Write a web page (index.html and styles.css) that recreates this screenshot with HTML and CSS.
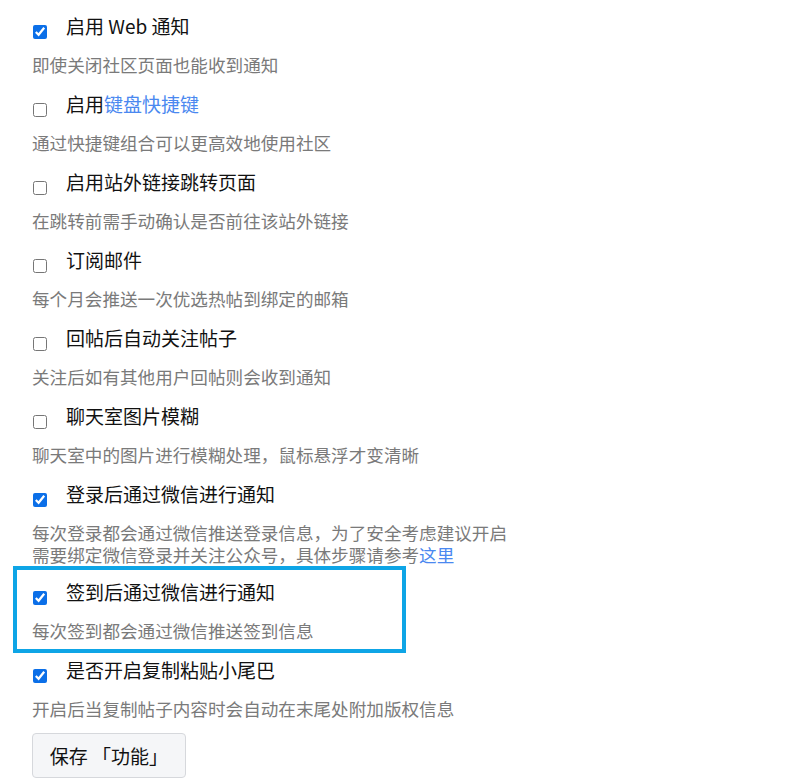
FILE: index.html
```html
<!DOCTYPE html>
<html lang="zh-CN">
<head>
    <meta charset="UTF-8">
    <meta name="viewport" content="width=device-width, initial-scale=1.0">
    <title>功能设置</title>
    <link rel="stylesheet" href="styles.css">
</head>
<body>
    <div class="settings">
        <div class="item">
            <label class="title"><input type="checkbox" checked><span>启用 Web 通知</span></label>
            <div class="desc">即使关闭社区页面也能收到通知</div>
        </div>
        <div class="item">
            <label class="title"><input type="checkbox"><span>启用<a href="#">键盘快捷键</a></span></label>
            <div class="desc">通过快捷键组合可以更高效地使用社区</div>
        </div>
        <div class="item">
            <label class="title"><input type="checkbox"><span>启用站外链接跳转页面</span></label>
            <div class="desc">在跳转前需手动确认是否前往该站外链接</div>
        </div>
        <div class="item">
            <label class="title"><input type="checkbox"><span>订阅邮件</span></label>
            <div class="desc">每个月会推送一次优选热帖到绑定的邮箱</div>
        </div>
        <div class="item">
            <label class="title"><input type="checkbox"><span>回帖后自动关注帖子</span></label>
            <div class="desc">关注后如有其他用户回帖则会收到通知</div>
        </div>
        <div class="item">
            <label class="title"><input type="checkbox"><span>聊天室图片模糊</span></label>
            <div class="desc">聊天室中的图片进行模糊处理，鼠标悬浮才变清晰</div>
        </div>
        <div class="item item-tight">
            <label class="title"><input type="checkbox" checked><span>登录后通过微信进行通知</span></label>
            <div class="desc">每次登录都会通过微信推送登录信息，为了安全考虑建议开启</div>
            <div class="desc">需要绑定微信登录并关注公众号，具体步骤请参考<a href="#">这里</a></div>
        </div>
        <div class="item highlight">
            <label class="title"><input type="checkbox" checked><span>签到后通过微信进行通知</span></label>
            <div class="desc">每次签到都会通过微信推送签到信息</div>
        </div>
        <div class="item">
            <label class="title"><input type="checkbox" checked><span>是否开启复制粘贴小尾巴</span></label>
            <div class="desc">开启后当复制帖子内容时会自动在末尾处附加版权信息</div>
        </div>
        <button class="save-btn">保存 「功能」</button>
    </div>
</body>
</html>
```

FILE: styles.css
```css
* {
    box-sizing: border-box;
    margin: 0;
    padding: 0;
}

body {
    font-family: 'Noto Sans CJK SC', 'Liberation Sans', sans-serif;
    background: #fff;
    color: #111;
}

.settings {
    padding: 11px 0 0 32px;
}

.item {
    margin-bottom: 13px;
}

.item-tight {
    margin-bottom: 11px;
}

.title {
    display: flex;
    align-items: flex-start;
    height: 30px;
    line-height: 30px;
    font-size: 19px;
    margin-bottom: 13px;
}

.title input {
    width: 14px;
    height: 14px;
    margin: 14px 19px 0 1px;
    flex-shrink: 0;
    accent-color: #0b6fe8;
}

.desc {
    height: 22px;
    font-size: 17.6px;
    line-height: 22px;
    color: #7a7a7a;
    white-space: nowrap;
}

a {
    color: #4a88f0;
    text-decoration: none;
}

.highlight {
    margin-left: -8px;
    padding-left: 8px;
    width: 371px;
    outline: 4px solid #0ea5e6;
    outline-offset: 7px;
}

.save-btn {
    width: 154px;
    height: 45px;
    font-family: inherit;
    font-size: 19px;
    color: #111;
    background: #f5f6f8;
    border: 1px solid #d6d8dc;
    border-radius: 4px;
    cursor: pointer;
}
```
